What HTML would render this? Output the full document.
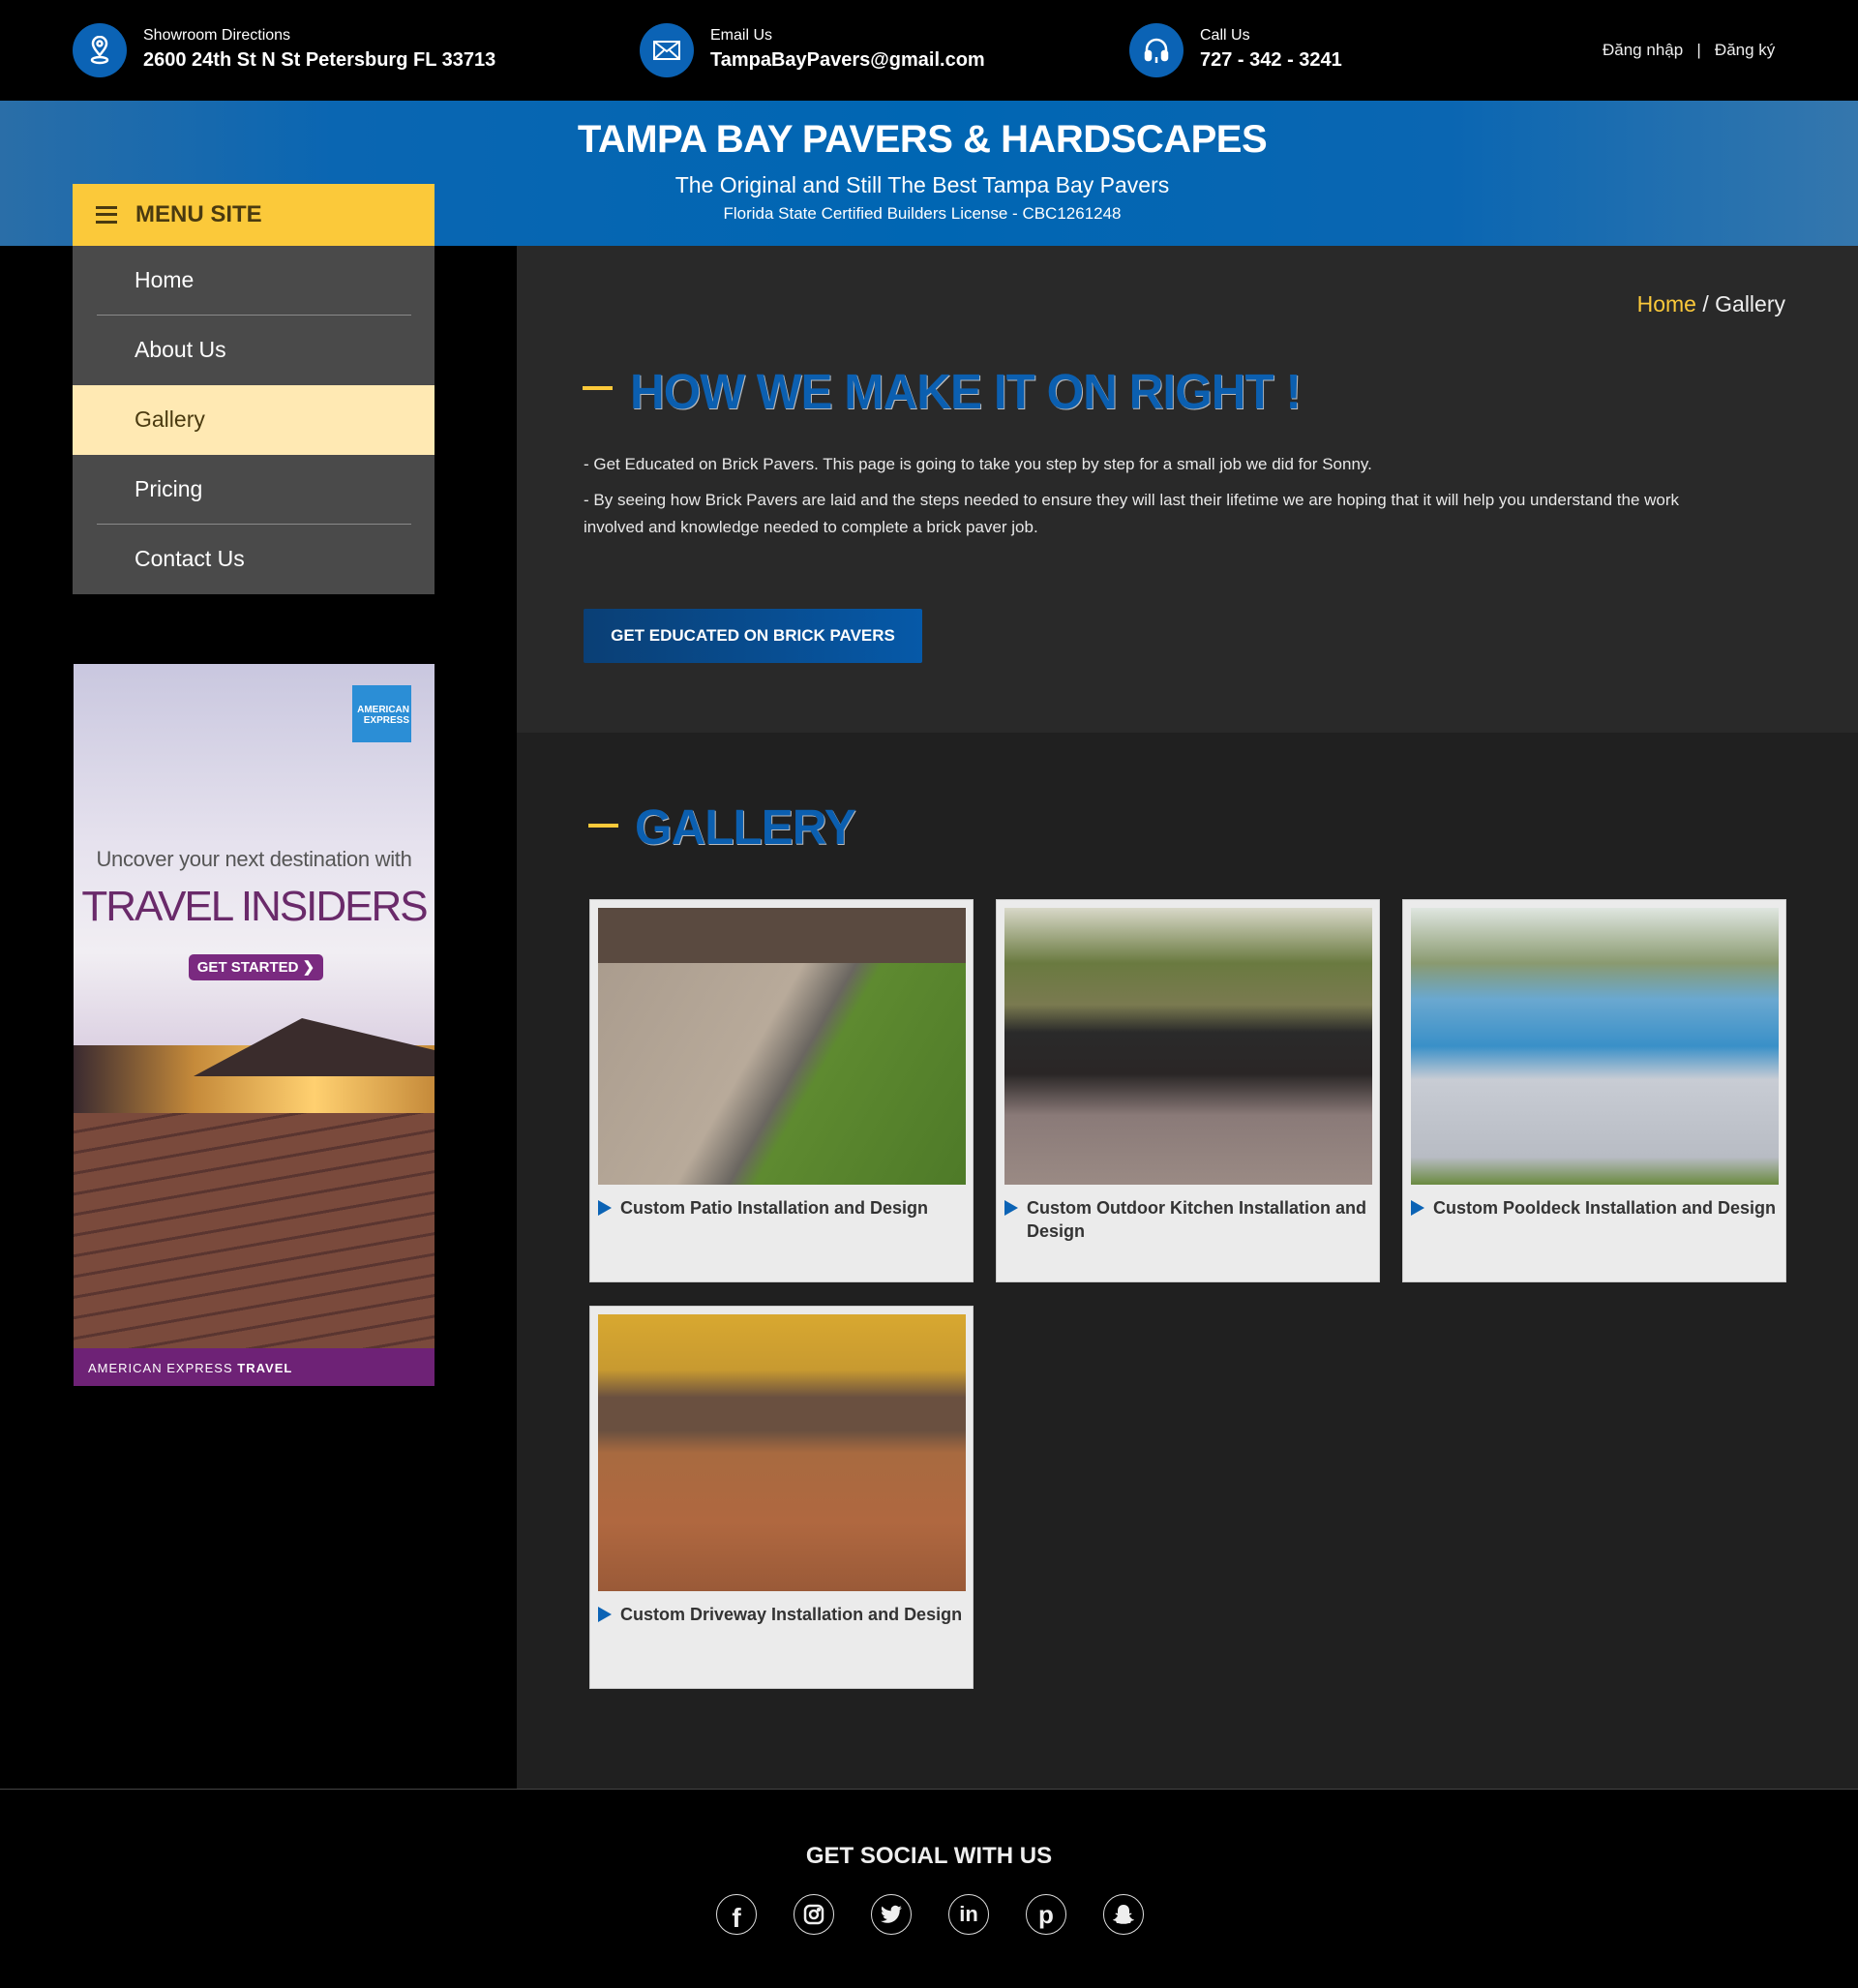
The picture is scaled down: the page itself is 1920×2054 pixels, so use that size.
<!DOCTYPE html>
<html><head><meta charset="utf-8"><style>
*{margin:0;padding:0;box-sizing:border-box}
body{width:1920px;height:2054px;background:#000;font-family:"Liberation Sans",Arial,sans-serif;position:relative;overflow:hidden;color:#fff}
.a{position:absolute}
.ic{width:56px;height:56px;border-radius:50%;background:#0b63b5;display:flex;align-items:center;justify-content:center}
.lbl{font-size:16px;color:#fff}
.val{font-size:20px;font-weight:bold;color:#fff}
.menu{left:75px;width:374px;height:72px;background:#4a4a4a;font-size:23px;padding-left:64px;line-height:70px;color:#fff}
.sep{left:100px;width:325px;height:2px;background:#8a8a8a}
.card{width:397px;height:396px;background:#ebebeb;border:1px solid #ccc}
.img{position:absolute;left:8px;top:8px;width:380px;height:286px}
.cap{position:absolute;left:8px;top:306px;right:8px;font-size:18px;font-weight:bold;color:#333;padding-left:23px;line-height:24px}
.cap:before{content:"";position:absolute;left:0;top:4px;border-left:14px solid #0b63b5;border-top:8px solid transparent;border-bottom:8px solid transparent}
.soc{width:42px;height:42px;border:1.5px solid #ddd;border-radius:50%;top:1957px;display:flex;align-items:center;justify-content:center}
.h{font-weight:bold;color:#0b5fb0;text-shadow:1px 1px 0 #bbb;letter-spacing:-1px;transform-origin:0 0;transform:scaleX(.97);white-space:nowrap}
</style></head><body>
<div class="a ic" style="left:75px;top:24px"><svg width="28" height="30" viewBox="0 0 28 30" fill="none" stroke="#fff" stroke-width="2.5"><path d="M14 20c-5-6-7-9-7-12a7 7 0 0 1 14 0c0 3-2 6-7 12z"/><circle cx="14" cy="8" r="2.5"/><ellipse cx="14" cy="25" rx="8" ry="3"/></svg></div>
<div class="a lbl" style="left:148px;top:28px">Showroom Directions</div>
<div class="a val" style="left:148px;top:51px">2600 24th St N St Petersburg FL 33713</div>
<div class="a ic" style="left:661px;top:24px"><svg width="30" height="24" viewBox="0 0 30 24" fill="none" stroke="#fff" stroke-width="2"><rect x="2" y="3" width="26" height="18"/><path d="M2 3l13 10 13-10M2 21l10-9M28 21l-10-9"/></svg></div>
<div class="a lbl" style="left:734px;top:28px">Email Us</div>
<div class="a val" style="left:734px;top:51px">TampaBayPavers@gmail.com</div>
<div class="a ic" style="left:1167px;top:24px"><svg width="30" height="30" viewBox="0 0 30 30" fill="none" stroke="#fff" stroke-width="2.5"><path d="M5 18v-4a10 10 0 0 1 20 0v4"/><rect x="4" y="16" width="5" height="9" rx="2" fill="#fff"/><rect x="21" y="16" width="5" height="9" rx="2" fill="#fff"/><path d="M15 22v6"/></svg></div>
<div class="a lbl" style="left:1240px;top:28px">Call Us</div>
<div class="a val" style="left:1240px;top:51px">727 - 342 - 3241</div>
<div class="a" style="left:1656px;top:42px;font-size:17px;color:#eee">Đăng nhập &nbsp; | &nbsp; Đăng ký</div>
<div class="a" style="left:0;top:104px;width:1920px;height:150px;background:linear-gradient(90deg,#2a6ea8 0%,#0a66b2 18%,#0066b3 50%,#0a66b2 78%,#3577ad 100%)"></div>
<div class="a" style="left:0;top:122px;width:1906px;text-align:center;font-size:40px;font-weight:bold;color:#fff;letter-spacing:-0.5px">TAMPA BAY PAVERS &amp; HARDSCAPES</div>
<div class="a" style="left:0;top:178px;width:1906px;text-align:center;font-size:23px;color:#fff">The Original and Still The Best Tampa Bay Pavers</div>
<div class="a" style="left:0;top:211px;width:1906px;text-align:center;font-size:17px;color:#fff">Florida State Certified Builders License - CBC1261248</div>
<div class="a" style="left:75px;top:190px;width:374px;height:64px;background:#fbc93a"></div>
<div class="a" style="left:99px;top:213px;width:22px;height:18px;border-top:3px solid #4a3a10;border-bottom:3px solid #4a3a10"></div>
<div class="a" style="left:99px;top:220px;width:22px;height:3px;background:#4a3a10"></div>
<div class="a" style="left:140px;top:208px;font-size:24px;font-weight:bold;color:#4a3a10">MENU SITE</div>
<div class="a menu" style="top:254px">Home</div>
<div class="a sep" style="top:325px"></div>
<div class="a menu" style="top:326px">About Us</div>
<div class="a menu" style="top:398px;background:#ffe9b3;color:#4a3a10">Gallery</div>
<div class="a menu" style="top:470px">Pricing</div>
<div class="a sep" style="top:541px"></div>
<div class="a menu" style="top:542px">Contact Us</div>
<div class="a" style="left:76px;top:686px;width:373px;height:746px;background:linear-gradient(180deg,#c9c7df 0%,#e6e2ee 25%,#f1eef3 40%,#d9cde0 55%,#9c8aa8 65%,#6e4c4c 75%,#8a5a40 85%,#5f3c33 95%)"></div>
<div class="a" style="left:76px;top:1080px;width:373px;height:70px;background:linear-gradient(90deg,#3a2a30,#c58a3a,#ffd070,#c58a3a)"></div>
<div class="a" style="left:200px;top:1052px;width:249px;height:60px;background:#3a2c2c;clip-path:polygon(45% 0,100% 55%,100% 100%,0 100%)"></div>
<div class="a" style="left:76px;top:1150px;width:373px;height:243px;background:repeating-linear-gradient(170deg,#7a4a3c 0 18px,#5a3530 18px 21px)"></div>
<div class="a" style="left:364px;top:708px;width:61px;height:59px;background:#2b8ed6;font-size:10px;font-weight:bold;color:#fff;text-align:right;padding:20px 2px 0 0;line-height:11px">AMERICAN<br>EXPRESS</div>
<div class="a" style="left:76px;top:875px;width:373px;text-align:center;font-size:22px;color:#555;letter-spacing:-0.3px;white-space:nowrap">Uncover your next destination with</div>
<div class="a" style="left:76px;top:912px;width:373px;text-align:center;font-size:44px;color:#6a2a6a;white-space:nowrap;letter-spacing:-2px">TRAVEL INSIDERS</div>
<div class="a" style="left:195px;top:986px;width:139px;height:27px;background:#7a2a80;border-radius:5px;font-size:15px;font-weight:bold;color:#fff;text-align:center;line-height:27px">GET STARTED ❯</div>
<div class="a" style="left:76px;top:1393px;width:373px;height:39px;background:#6e2276;font-size:13px;color:#fff;padding:13px 15px;letter-spacing:1px">AMERICAN EXPRESS <b>TRAVEL</b></div>
<div class="a" style="left:534px;top:254px;width:1386px;height:503px;background:#292929"></div>
<div class="a" style="left:534px;top:757px;width:1386px;height:1091px;background:#202020"></div>
<div class="a" style="top:301px;right:75px;text-align:right;font-size:23px;color:#eee"><span style="color:#fbc93a">Home</span> / Gallery</div>
<div class="a" style="left:602px;top:399px;width:31px;height:4px;background:#fbc93a"></div>
<div class="a h" style="left:651px;top:375px;font-size:51px">HOW WE MAKE IT ON RIGHT !</div>
<div class="a" style="left:603px;top:466px;width:1240px;font-size:17px;color:#e8e8e8;line-height:28px">- Get Educated on Brick Pavers. This page is going to take you step by step for a small job we did for Sonny.</div>
<div class="a" style="left:603px;top:503px;width:1195px;font-size:17px;color:#e8e8e8;line-height:28px">- By seeing how Brick Pavers are laid and the steps needed to ensure they will last their lifetime we are hoping that it will help you understand the work involved and knowledge needed to complete a brick paver job.</div>
<div class="a" style="left:603px;top:629px;width:350px;height:56px;background:linear-gradient(90deg,#0a3f75,#0659a8);border-radius:2px;font-size:17px;font-weight:bold;color:#fff;text-align:center;line-height:56px">GET EDUCATED ON BRICK PAVERS</div>
<div class="a" style="left:608px;top:851px;width:31px;height:4px;background:#fbc93a"></div>
<div class="a h" style="left:656px;top:825px;font-size:51px">GALLERY</div>
<div class="a card" style="left:609px;top:929px"><div class="img" style="background:linear-gradient(180deg,#5a4a40 0 20%,transparent 20%),linear-gradient(120deg,#a89a8c 0%,#b8aa9a 45%,#6a6660 55%,#5e8a30 60%,#4e7a28 100%)"></div><div class="cap">Custom Patio Installation and Design</div></div>
<div class="a card" style="left:1029px;top:929px"><div class="img" style="background:linear-gradient(180deg,#d8d8c8 0%,#6a7a40 20%,#7a7a50 35%,#2a2a2a 45%,#2a2626 60%,#8a7a78 75%,#9a8a84 100%)"></div><div class="cap">Custom Outdoor Kitchen Installation and Design</div></div>
<div class="a card" style="left:1449px;top:929px"><div class="img" style="background:linear-gradient(180deg,#dfe6e0 0%,#8a9a70 20%,#6aa8d0 33%,#3a90c8 50%,#c8ccd4 62%,#b8bcc4 90%,#6a8a40 100%)"></div><div class="cap">Custom Pooldeck Installation and Design</div></div>
<div class="a card" style="left:609px;top:1349px"><div class="img" style="background:linear-gradient(180deg,#d8a830 0%,#c89a30 20%,#6a5040 30%,#6a5040 42%,#a86a40 50%,#b06840 75%,#9a5a38 100%)"></div><div class="cap">Custom Driveway Installation and Design</div></div>
<div class="a" style="left:0;top:1848px;width:1920px;height:1px;background:#444"></div>
<div class="a" style="left:0;top:1904px;width:1920px;text-align:center;font-size:24px;font-weight:bold;color:#eee">GET SOCIAL WITH US</div>
<div class="a soc" style="left:740px"><span style="font-size:28px;font-weight:bold;color:#eee;margin-top:8px">f</span></div>
<div class="a soc" style="left:820px"><svg width="22" height="22" viewBox="0 0 22 22" fill="none" stroke="#eee" stroke-width="2.5"><rect x="2" y="2" width="18" height="18" rx="5"/><circle cx="11" cy="11" r="4"/><circle cx="16" cy="6" r="0.8" fill="#eee"/></svg></div>
<div class="a soc" style="left:900px"><svg width="22" height="20" viewBox="0 0 24 20"><path fill="#eee" d="M24 2.4a10 10 0 0 1-2.8.8A5 5 0 0 0 23.3.4a10 10 0 0 1-3.1 1.2A4.9 4.9 0 0 0 11.8 6 14 14 0 0 1 1.7.9a4.9 4.9 0 0 0 1.5 6.6A4.9 4.9 0 0 1 1 6.9a4.9 4.9 0 0 0 4 4.9 4.9 4.9 0 0 1-2.2.1 4.9 4.9 0 0 0 4.6 3.4A9.9 9.9 0 0 1 0 17.4 14 14 0 0 0 7.5 19.6c9.1 0 14-7.5 14-14v-.6A10 10 0 0 0 24 2.4z"/></svg></div>
<div class="a soc" style="left:980px"><span style="font-size:22px;font-weight:bold;color:#eee">in</span></div>
<div class="a soc" style="left:1060px"><span style="font-size:26px;font-weight:bold;color:#eee">p</span></div>
<div class="a soc" style="left:1140px"><svg width="24" height="22" viewBox="0 0 24 22"><path fill="#eee" d="M12 1c4 0 6 3 6 6v3l2-.5.5 1-2.5 1.5c1 2.5 3 4 5 4.5-.5 1-2 1-3 1.3L19 20c-2-.3-3 .8-7 .8s-5-1.1-7-.8l-1-2.2c-1-.3-2.5-.3-3-1.3 2-.5 4-2 5-4.5L3.5 10.5 4 9.5l2 .5V7c0-3 2-6 6-6z"/></svg></div>
</body></html>
